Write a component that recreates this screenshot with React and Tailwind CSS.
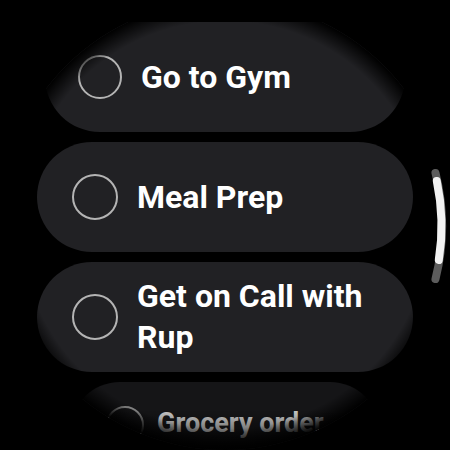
import React from 'react';

const tasks = [
  { id: 1, title: 'Go to Gym', size: 'top' },
  { id: 2, title: 'Meal Prep', size: 'full' },
  { id: 3, title: 'Get on Call with Rup', size: 'full' },
  { id: 4, title: 'Grocery order', size: 'bottom' },
];

const chipStyles = {
  top: {
    chip: 'w-[360px] h-[110px] pl-[33px] pr-8 bg-[#212124]',
    ring: 'w-[44px] h-[44px] border-[#b4b4b4]',
    text: 'text-[32px] leading-[40px] ml-[19px] text-white',
  },
  full: {
    chip: 'w-[376px] h-[110px] pl-[35px] pr-8 bg-[#212124]',
    ring: 'w-[46px] h-[46px] border-[#b4b4b4]',
    text: 'text-[32px] leading-[41px] ml-[19px] text-white',
  },
  bottom: {
    chip: 'w-[310px] h-[100px] pl-[36px] pr-8 items-start pt-[24px] bg-[#151517]',
    ring: 'w-[38px] h-[38px] border-[#8c8c8c]',
    text: 'text-[27px] leading-[34px] ml-[13px] text-[#c8c8c8]',
  },
};

const TaskChip = ({ title, size }) => {
  const s = chipStyles[size];
  return (
    <div className={`flex items-center shrink-0 rounded-full ${s.chip}`}>
      <div className={`shrink-0 rounded-full border-2 ${s.ring}`} />
      <span className={`font-bold ${s.text}`}>{title}</span>
    </div>
  );
};

const ScrollIndicator = () => (
  <svg className="absolute inset-0 pointer-events-none" width="450" height="450" viewBox="0 0 450 450">
    {/* track */}
    <path d="M 435.5 173 A 217 217 0 0 1 435.5 279" fill="none" stroke="#5c5c5c" strokeWidth="8" strokeLinecap="round" />
    {/* thumb */}
    <path d="M 436.8 181 A 217 217 0 0 1 438.8 260" fill="none" stroke="#f2f2f2" strokeWidth="8" strokeLinecap="round" />
  </svg>
);

export default function App() {
  return (
    <div className="w-[450px] h-[450px] bg-black relative overflow-hidden" style={{ fontFamily: 'Roboto, "Noto Sans", sans-serif' }}>
      {/* round watch face */}
      <div className="absolute inset-0 rounded-full overflow-hidden">
        <div className="flex flex-col items-center gap-[10px] pt-[22px]">
          {tasks.map((t) => (
            <TaskChip key={t.id} title={t.title} size={t.size} />
          ))}
        </div>
        {/* soft edge of the round screen */}
        <div className="absolute inset-0 bg-[radial-gradient(circle_at_center,transparent_204px,black_225px)]" />
        {/* fade at the bottom edge */}
        <div className="absolute left-0 right-0 bottom-0 h-[40px] bg-gradient-to-b from-transparent to-black/80" />
      </div>
      <ScrollIndicator />
    </div>
  );
}
